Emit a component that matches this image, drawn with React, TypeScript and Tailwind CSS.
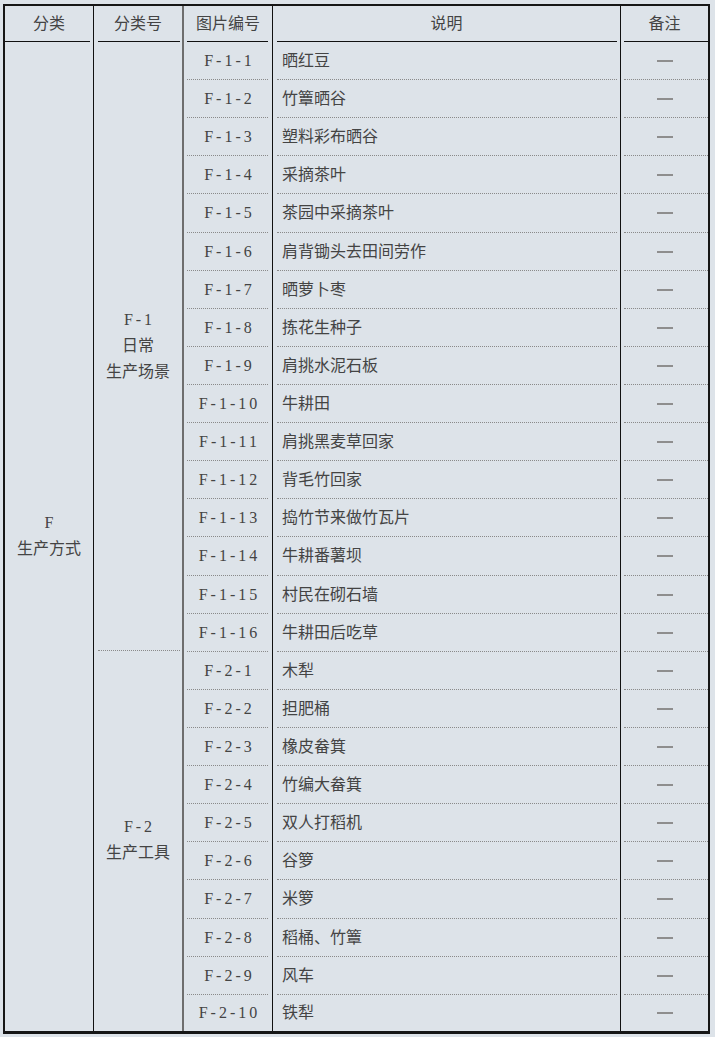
const rows1 = [
  ['F-1-1', '晒红豆'],
  ['F-1-2', '竹簟晒谷'],
  ['F-1-3', '塑料彩布晒谷'],
  ['F-1-4', '采摘茶叶'],
  ['F-1-5', '茶园中采摘茶叶'],
  ['F-1-6', '肩背锄头去田间劳作'],
  ['F-1-7', '晒萝卜枣'],
  ['F-1-8', '拣花生种子'],
  ['F-1-9', '肩挑水泥石板'],
  ['F-1-10', '牛耕田'],
  ['F-1-11', '肩挑黑麦草回家'],
  ['F-1-12', '背毛竹回家'],
  ['F-1-13', '捣竹节来做竹瓦片'],
  ['F-1-14', '牛耕番薯坝'],
  ['F-1-15', '村民在砌石墙'],
  ['F-1-16', '牛耕田后吃草'],
];

const rows2 = [
  ['F-2-1', '木犁'],
  ['F-2-2', '担肥桶'],
  ['F-2-3', '橡皮畚箕'],
  ['F-2-4', '竹编大畚箕'],
  ['F-2-5', '双人打稻机'],
  ['F-2-6', '谷箩'],
  ['F-2-7', '米箩'],
  ['F-2-8', '稻桶、竹簟'],
  ['F-2-9', '风车'],
  ['F-2-10', '铁犁'],
];

const allRows = [...rows1, ...rows2];

function Header({ label, line }: { label: string; line: string }) {
  return (
    <div className="flex h-[36px] flex-col">
      <div className="flex flex-1 items-center justify-center">{label}</div>
      <div className={`h-px bg-[#111] ${line}`} />
    </div>
  );
}

function Dotted({ className }: { className: string }) {
  return <div className={`border-b border-dotted border-[#8a8a8a] ${className}`} />;
}

export default function App() {
  return (
    <div
      className="min-h-screen bg-[#dde3e9] pl-[3px] pt-[4px] text-[16px] text-[#444]"
      style={{ fontFamily: '"Liberation Serif", "Noto Sans CJK SC", serif' }}
    >
      <div className="flex w-[707px] border-2 border-b-[3px] border-[#161616]">
        {/* 分类 */}
        <div className="flex w-[89px] flex-col border-r border-[#111]">
          <Header label="分类" line="mr-[3px]" />
          <div className="flex h-[987px] flex-col items-center justify-center leading-[26px]">
            <div>F</div>
            <div>生产方式</div>
          </div>
        </div>

        {/* 分类号 */}
        <div className="flex w-[90px] flex-col border-r-2 border-[#6e6e6e]">
          <Header label="分类号" line="ml-[4px] mr-[2px]" />
          <div className="flex h-[609px] flex-col">
            <div className="flex flex-1 flex-col items-center justify-center leading-[26px]">
              <div className="pl-[3px] tracking-[3px]">F-1</div>
              <div>日常</div>
              <div>生产场景</div>
            </div>
            <Dotted className="ml-[4px] mr-[2px]" />
          </div>
          <div className="flex h-[378px] flex-col items-center justify-center leading-[26px]">
            <div className="pl-[3px] tracking-[3px]">F-2</div>
            <div>生产工具</div>
          </div>
        </div>

        {/* 图片编号 / 说明 / 备注 */}
        <div className="flex flex-1 flex-col">
          <div className="flex">
            <div className="w-[89px] border-r border-[#111]">
              <Header label="图片编号" line="ml-[3px] mr-[4px]" />
            </div>
            <div className="w-[348px] border-r border-[#111]">
              <Header label="说明" line="ml-[4px] mr-[3px]" />
            </div>
            <div className="flex-1">
              <Header label="备注" line="ml-[3px]" />
            </div>
          </div>
          {allRows.map(([code, desc], i) => {
            const last = i === allRows.length - 1;
            const h = last ? 'h-[36px]' : i % 9 === 4 ? 'h-[39px]' : 'h-[38px]';
            return (
              <div key={code} className={`flex ${h}`}>
                <div className="flex w-[89px] flex-col border-r border-[#111]">
                  <div className="flex flex-1 items-center justify-center pl-[3px] tracking-[3px]">{code}</div>
                  {!last && <Dotted className="ml-[3px] mr-[4px]" />}
                </div>
                <div className="flex w-[348px] flex-col border-r border-[#111]">
                  <div className="flex flex-1 items-center pl-[9px]">{desc}</div>
                  {!last && <Dotted className="ml-[4px] mr-[3px]" />}
                </div>
                <div className="flex flex-1 flex-col">
                  <div className="flex flex-1 items-center justify-center">
                    <span className="h-[2px] w-[16px] bg-[#8e8e8e]" />
                  </div>
                  {!last && <Dotted className="ml-[3px]" />}
                </div>
              </div>
            );
          })}
        </div>
      </div>
    </div>
  );
}
